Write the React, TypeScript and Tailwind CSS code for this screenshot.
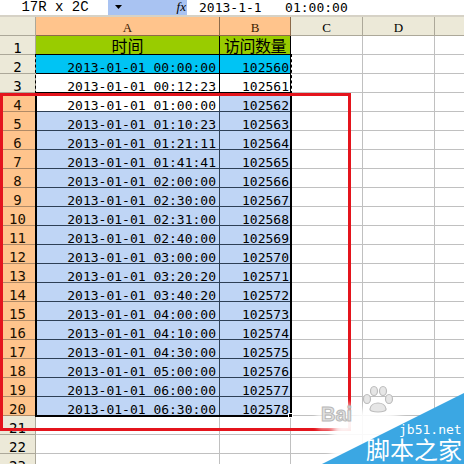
import React from 'react'

const DATA: [string, number][] = [
  ['00:00:00', 102560],
  ['00:12:23', 102561],
  ['01:00:00', 102562],
  ['01:10:23', 102563],
  ['01:21:11', 102564],
  ['01:41:41', 102565],
  ['02:00:00', 102566],
  ['02:30:00', 102567],
  ['02:31:00', 102568],
  ['02:40:00', 102569],
  ['03:00:00', 102570],
  ['03:20:20', 102571],
  ['03:40:20', 102572],
  ['04:00:00', 102573],
  ['04:10:00', 102574],
  ['04:30:00', 102575],
  ['05:00:00', 102576],
  ['06:00:00', 102577],
  ['06:30:00', 102578],
]

const mono = "font-['DejaVu_Sans_Mono',monospace]"

function RowHead({ n, on }: { n: number; on?: boolean }) {
  return (
    <div
      className={`flex h-[19px] items-end justify-center border-r border-b text-[14px] leading-[12px] ${mono} ${
        on ? 'bg-[#ffc48c] border-[#b08a66] text-[#201000]' : 'bg-[#ece9d8] border-[#aca899] text-black'
      }`}
    >
      {n}
    </div>
  )
}

function Blank({ last }: { last?: boolean }) {
  return <div className={`h-[19px] border-b border-[#c0c0c0] ${last ? '' : 'border-r'}`} />
}

function DataRow({ n, time, value }: { n: number; time: string; value: number }) {
  const sel = n >= 4
  const bgA = n === 2 ? 'bg-[#00c4f4]' : sel && n !== 4 ? 'bg-[#bfd5f5]' : 'bg-white'
  const bgB = n === 2 ? 'bg-[#00c4f4]' : sel ? 'bg-[#bfd5f5]' : 'bg-white'
  const line = sel ? 'border-[#2d3f55]' : 'border-black'
  return (
    <>
      <RowHead n={n} on={sel} />
      <div className={`flex h-[19px] items-end justify-end border-r border-b pr-[3px] text-[13px] leading-[11px] ${mono} ${bgA} ${line}`}>
        2013-01-01 {time}
      </div>
      <div className={`flex h-[19px] items-end justify-end border-r border-b pr-[1px] text-[13px] leading-[11px] ${mono} ${bgB} ${line}`}>
        {value}
      </div>
      <Blank />
      <Blank />
      <Blank last />
    </>
  )
}

export default function App() {
  return (
    <div className="relative h-[464px] w-[464px] overflow-hidden bg-white text-black">
      {/* formula bar */}
      <div className="flex h-[15px]">
        <div className="w-[108px] bg-white pl-[2px] text-center font-['Liberation_Mono',monospace] text-[14px] leading-[14px]">
          17R x 2C
        </div>
        <div className="relative w-[79px] bg-[#a9c3f2]">
          <svg className="absolute left-[7px] top-[5px]" width="7" height="4" viewBox="0 0 7 4">
            <path d="M0 0 H7 L3.5 4 Z" fill="#000" />
          </svg>
          <span className="absolute right-[1px] top-0 font-['Liberation_Serif',serif] text-[13px] italic leading-[14px]">
            fx
          </span>
        </div>
        <div className={`flex-1 whitespace-pre bg-white pl-[12px] text-[13px] leading-[15px] ${mono}`}>
          2013-1-1   01:00:00
        </div>
      </div>
      <div className="h-[2px] bg-[#d6d2c6]" />

      {/* sheet */}
      <div className="grid grid-cols-[36px_184px_71px_72px_72px_1fr] auto-rows-[19px]">
        {/* column headers */}
        <div className="border-r border-b border-[#aca899] bg-[#ece9d8]" />
        {['A', 'B', 'C', 'D', ''].map((c, i) => (
          <div
            key={i}
            className={`flex items-end justify-center border-b pb-[1px] font-['Liberation_Serif',serif] text-[13px] leading-[12px] ${
              i < 2 ? 'bg-[#ffc48c] border-[#8c6a4a] text-[#3a1a00]' : 'bg-[#ece9d8] border-[#aca899]'
            } ${i < 4 ? 'border-r' : ''}`}
          >
            {c}
          </div>
        ))}

        {/* row 1 */}
        <RowHead n={1} />
        <div className="border-r border-b border-black bg-[#99cc00] pt-[1px] text-center font-['Noto_Sans_CJK_SC',sans-serif] text-[16px] leading-[16px]">
          时间
        </div>
        <div className="border-r border-b border-black bg-[#99cc00] pt-[1px] text-center font-['Noto_Sans_CJK_SC',sans-serif] text-[16px] leading-[16px] tracking-[-0.5px]">
          访问数量
        </div>
        <Blank />
        <Blank />
        <Blank last />

        {DATA.map(([t, v], i) => (
          <DataRow key={i} n={i + 2} time={t} value={v} />
        ))}

        {[21, 22, 23].map((n) => (
          <React.Fragment key={n}>
            <RowHead n={n} />
            <Blank />
            <Blank />
            <Blank />
            <Blank />
            <Blank last />
          </React.Fragment>
        ))}
      </div>

      {/* copy range marching ants */}
      <div className="absolute left-[35px] top-[54px] h-[40px] w-[257px] border border-dashed border-black" />

      {/* selection border and fill handle */}
      <div className="absolute left-[35px] top-[92px] h-[325px] w-[257px] border-2 border-black" />
      <div className="absolute left-[288px] top-[413px] h-[5px] w-[5px] border border-white bg-black" />

      {/* red annotation box */}
      <div className="absolute left-0 top-[93px] h-[338px] w-[351px] border-[3px] border-[#e4141c]" />

      {/* watermark */}
      <div className="absolute left-[330px] top-[409px] h-[72px] w-[84px] rounded-full bg-white/90 blur-[3px]" />
      <div className="absolute left-[316px] top-[402px] h-[28px] w-[36px] rounded-md bg-white/60 blur-[2px]" />
      <svg className="absolute left-0 top-0" width="464" height="464" viewBox="0 0 464 464">
        <g fill="#e6e6e6" stroke="#bdbdbd" strokeWidth="1.2">
          <ellipse cx="367" cy="399" rx="3.5" ry="4.5" />
          <ellipse cx="374" cy="391" rx="3.5" ry="4.5" />
          <ellipse cx="383" cy="391" rx="3.5" ry="4.5" />
          <ellipse cx="389" cy="399" rx="3.5" ry="4.5" />
          <path d="M370 409 C371 401 385 401 386 409 C387 413 369 413 370 409 Z" />
        </g>
        <polygon points="322,464 464,393 464,464" fill="#3ba7e3" />
      </svg>
      <div className="absolute left-[321px] top-[402px] font-['Liberation_Sans',sans-serif] text-[20px] font-bold leading-[24px] text-[#e2e2e2] [-webkit-text-stroke:1px_#b8b8b8]">
        Bai
      </div>
      <div className={`absolute left-[399px] top-[423px] text-[13px] leading-[14px] text-white ${mono}`}>jb51.net</div>
      <div className="absolute left-[366px] top-[435px] font-['Noto_Sans_CJK_SC',sans-serif] text-[24px] leading-[28px] text-white">
        脚本之家
      </div>
    </div>
  )
}
